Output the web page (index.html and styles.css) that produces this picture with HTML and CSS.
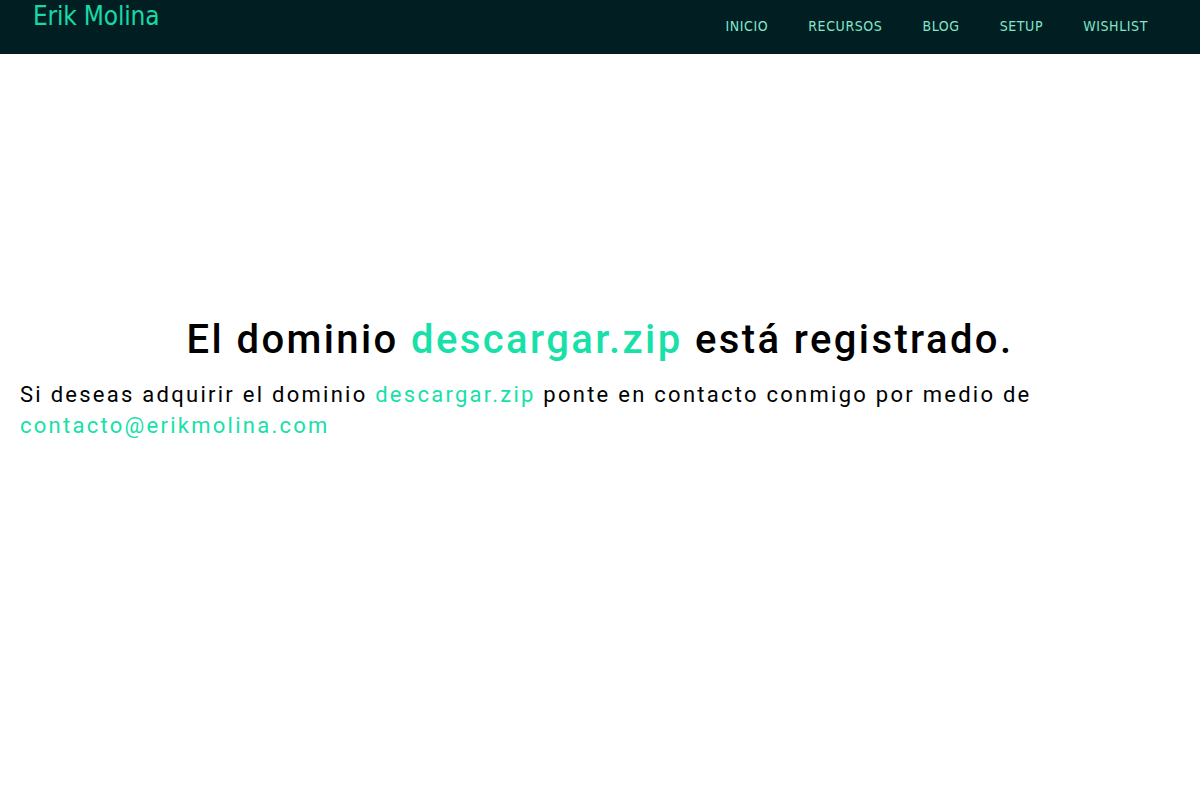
FILE: index.html
```html
<!DOCTYPE html>
<html lang="es">
<head>
<meta charset="utf-8">
<title>Erik Molina</title>
<link rel="stylesheet" href="styles.css">
</head>
<body>
<header class="site-header">
  <a class="logo" href="#">Erik Molina</a>
  <nav class="nav">
    <a href="#">INICIO</a>
    <a href="#">RECURSOS</a>
    <a href="#">BLOG</a>
    <a href="#">SETUP</a>
    <a href="#">WISHLIST</a>
  </nav>
</header>
<main class="content">
  <h1 class="title">El dominio <span class="accent">descargar.zip</span> está registrado.</h1>
  <p class="text">Si deseas adquirir el dominio <span class="accent">descargar.zip</span> ponte en contacto conmigo por medio de <span class="accent">contacto@erikmolina.com</span></p>
</main>
</body>
</html>
```
FILE: styles.css
```css
html, body {
  margin: 0;
  padding: 0;
  background: #ffffff;
}
body {
  font-family: Roboto, "Liberation Sans", sans-serif;
}
.site-header {
  height: 54px;
  background: #011f23;
  display: flex;
  justify-content: space-between;
  align-items: flex-start;
  padding: 0 32px 0 33px;
  box-sizing: border-box;
}
.logo {
  font-family: "DejaVu Sans Condensed", "DejaVu Sans", sans-serif;
  font-size: 26px;
  line-height: 32px;
  color: #17d9a6;
  text-decoration: none;
  letter-spacing: -0.2px;
}
.nav {
  display: flex;
  padding-top: 17px;
}
.nav a {
  font-family: "DejaVu Sans Condensed", "DejaVu Sans", sans-serif;
  font-size: 14px;
  line-height: 18px;
  color: #82e6c9;
  text-decoration: none;
  padding: 0 20px;
  letter-spacing: 0.6px;
}
.content {
  padding: 262px 20px 0;
}
.title {
  margin: 0;
  text-align: center;
  font-size: 40px;
  font-weight: 500;
  letter-spacing: 2.4px;
  line-height: 48px;
  color: #000000;
}
.text {
  margin: 15px 0 0;
  font-size: 22px;
  font-weight: 400;
  letter-spacing: 2.26px;
  line-height: 31px;
  color: #000000;
}
.accent {
  color: #17e0a9;
}
```
